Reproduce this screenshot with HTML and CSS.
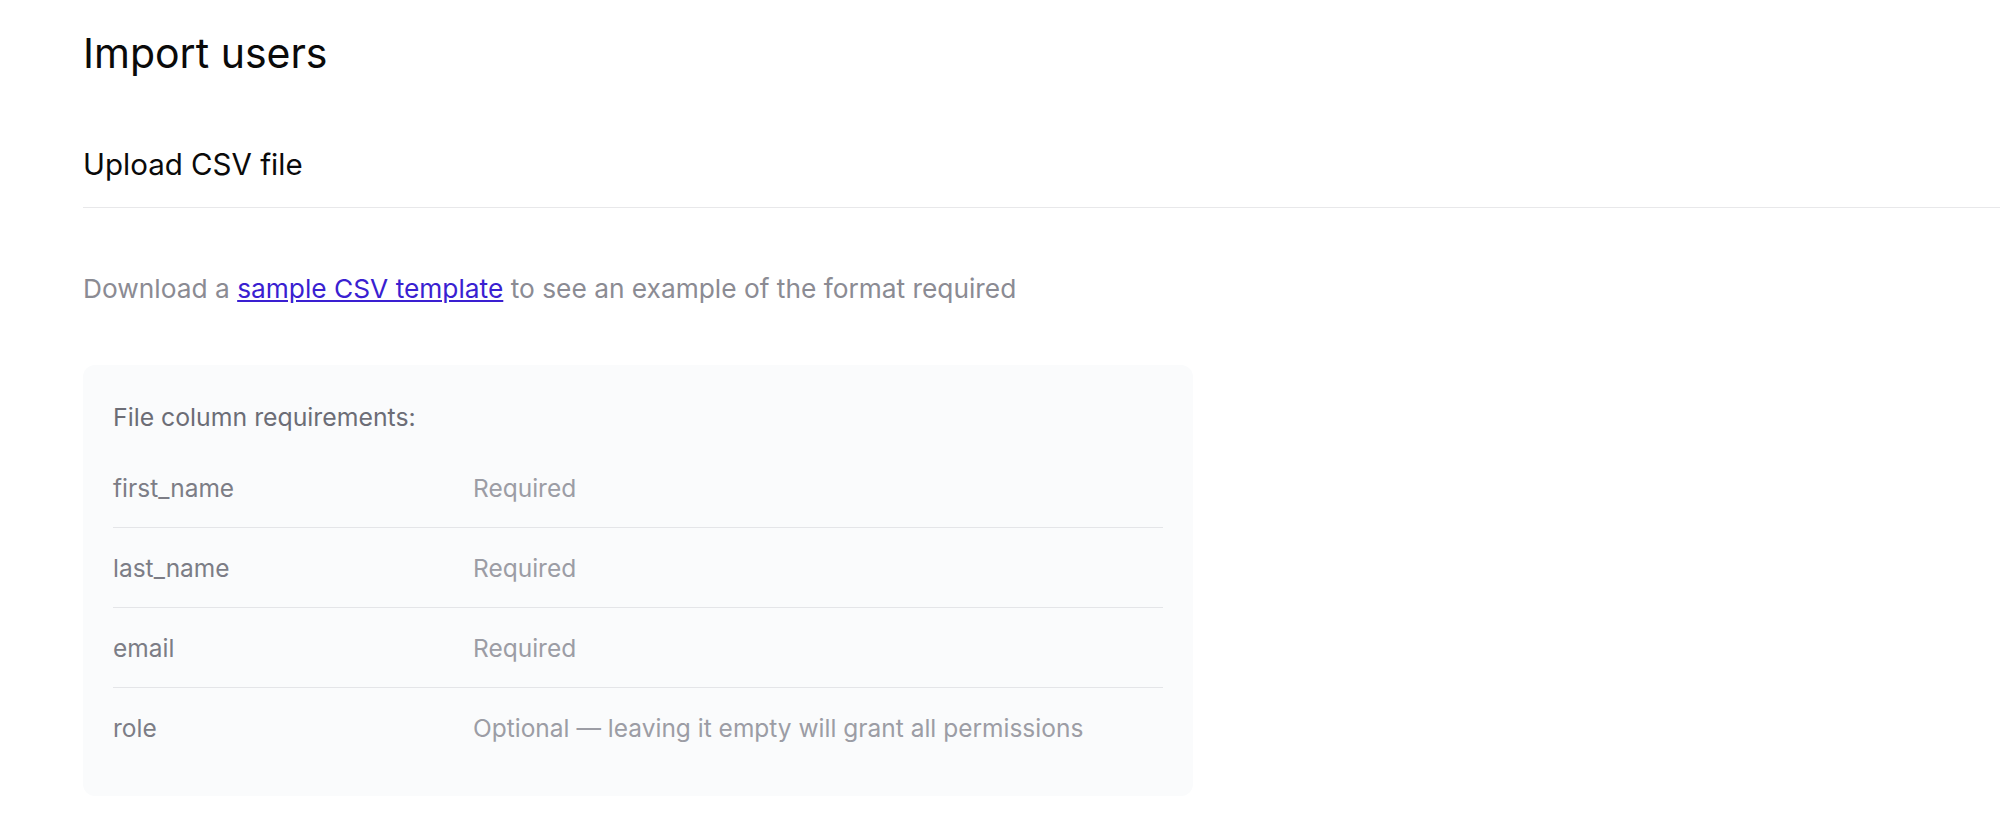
FILE: index.html
```html
<!DOCTYPE html>
<html lang="en">
<head>
<meta charset="utf-8">
<title>Import users</title>
<link rel="stylesheet" href="styles.css">
</head>
<body>
<main class="page">
  <h1 class="title">Import users</h1>
  <section class="upload">
    <h2 class="section-title">Upload CSV file</h2>
    <p class="hint">Download a <a class="link" href="#">sample CSV template</a> to see an example of the format required</p>
    <div class="reqs">
      <div class="reqs-title">File column requirements:</div>
      <div class="row">
        <span class="col-name">first_name</span>
        <span class="col-desc">Required</span>
      </div>
      <div class="row">
        <span class="col-name">last_name</span>
        <span class="col-desc">Required</span>
      </div>
      <div class="row">
        <span class="col-name">email</span>
        <span class="col-desc">Required</span>
      </div>
      <div class="row">
        <span class="col-name">role</span>
        <span class="col-desc">Optional — leaving it empty will grant all permissions</span>
      </div>
    </div>
  </section>
</main>
</body>
</html>
```
FILE: styles.css
```css
html, body {
  margin: 0;
  padding: 0;
  background: #ffffff;
}
body {
  font-family: Inter, "Noto Sans", sans-serif;
  color: #000;
}
.page {
  padding: 28px 0 0 83px;
}
.title {
  margin: 0;
  font-size: 41px;
  line-height: 50px;
  font-weight: 400;
  color: #0a0a0a;
}
.section-title {
  margin: 68px 0 0;
  font-size: 29.5px;
  line-height: 36px;
  font-weight: 400;
  color: #0a0a0a;
  padding-bottom: 25px;
  border-bottom: 1px solid #e8e8ea;
}
.hint {
  margin: 64px 0 0;
  font-size: 26.3px;
  line-height: 34px;
  color: #8b8b93;
}
.link {
  color: #3a1fd1;
  text-decoration: underline;
}
.reqs {
  margin-top: 59px;
  width: 1050px;
  padding: 36px 30px 29px;
  background: #fafbfc;
  border-radius: 12px;
}
.reqs-title {
  font-size: 24.8px;
  line-height: 32px;
  color: #6c6d76;
  margin-bottom: 15px;
}
.row {
  display: grid;
  grid-template-columns: 360px 1fr;
  padding: 24px 0 23px;
  font-size: 24.5px;
  line-height: 32px;
  border-bottom: 1px solid #e4e5e8;
}
.row:last-child {
  border-bottom: none;
}
.col-name {
  color: #7c7d86;
}
.col-desc {
  color: #9c9da5;
}
```
